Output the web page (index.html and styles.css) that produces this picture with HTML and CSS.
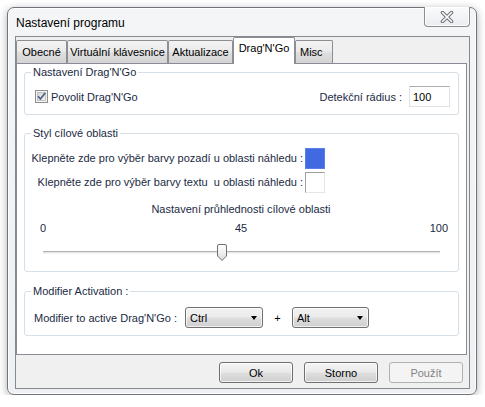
FILE: index.html
```html
<!DOCTYPE html>
<html lang="cs">
<head>
<meta charset="utf-8">
<title>Nastavení programu</title>
<link rel="stylesheet" href="styles.css">
</head>
<body>
<div class="window">
  <div class="titlebar">
    <span class="title">Nastavení programu</span>
    <div class="close">
      <svg width="14" height="12" viewBox="0 0 14 12">
        <path d="M2.5 1.5 L11.5 10.5 M11.5 1.5 L2.5 10.5" stroke="#6d7075" stroke-width="3.6" stroke-linecap="round" fill="none"/>
        <path d="M2.5 1.5 L11.5 10.5 M11.5 1.5 L2.5 10.5" stroke="#ffffff" stroke-width="1.6" stroke-linecap="round" fill="none"/>
      </svg>
    </div>
  </div>
  <div class="client">
    <div class="tabs">
      <div class="tab t1">Obecné</div>
      <div class="tab t2">Virtuální klávesnice</div>
      <div class="tab t3">Aktualizace</div>
      <div class="tab t4 active">Drag'N'Go</div>
      <div class="tab t5">Misc</div>
    </div>
    <div class="panel">
      <fieldset class="group g1">
        <legend>Nastavení Drag'N'Go</legend>
        <div class="row">
          <span class="check">
            <svg width="13" height="13" viewBox="0 0 13 13">
              <defs>
                <linearGradient id="cb" x1="0" y1="0" x2="1" y2="1">
                  <stop offset="0" stop-color="#d3d3d3"/>
                  <stop offset="1" stop-color="#f6f6f6"/>
                </linearGradient>
              </defs>
              <rect x="0.5" y="0.5" width="12" height="12" fill="#f4f4f4" stroke="#8e8f8f"/>
              <rect x="2.5" y="2.5" width="8" height="8" fill="url(#cb)" stroke="#b9b9b9" stroke-width="0.8"/>
              <path d="M3 6.3 L5.4 9 L10.2 3" stroke="#4a5f8c" stroke-width="1.7" fill="none"/>
            </svg>
          </span>
          <span class="checklabel">Povolit Drag'N'Go</span>
          <span class="spacer"></span>
          <span class="lbl">Detekční rádius :</span>
          <span class="textbox">100</span>
        </div>
      </fieldset>

      <fieldset class="group g2">
        <legend>Styl cílové oblasti</legend>
        <div class="colorrows">
          <span class="clabel">Klepněte zde pro výběr barvy pozadí u oblasti náhledu :</span>
          <span class="swatch blue"></span>
          <span class="clabel">Klepněte zde pro výběr barvy textu &nbsp;u oblasti náhledu :</span>
          <span class="swatch white"></span>
        </div>
        <div class="slidertitle">Nastavení průhlednosti cílové oblasti</div>
        <div class="ticks">
          <span class="tl">0</span>
          <span class="tc">45</span>
          <span class="tr">100</span>
        </div>
        <div class="slider">
          <div class="track"></div>
          <svg class="thumb" style="left: calc(45% - 5px)" width="10" height="17" viewBox="0 0 10 17">
            <defs>
              <linearGradient id="th" x1="0" y1="0" x2="0" y2="1">
                <stop offset="0" stop-color="#ffffff"/>
                <stop offset="0.5" stop-color="#f0f0f0"/>
                <stop offset="1" stop-color="#d9d9d9"/>
              </linearGradient>
            </defs>
            <path d="M2 0.5 H8 Q9.5 0.5 9.5 2 V12 L5 16.5 L0.5 12 V2 Q0.5 0.5 2 0.5 Z" fill="url(#th)" stroke="#707070"/>
          </svg>
        </div>
      </fieldset>

      <fieldset class="group g3">
        <legend>Modifier Activation :</legend>
        <div class="row">
          <span class="modlabel">Modifier to active Drag'N'Go :</span>
          <span class="combo c1">Ctrl<span class="arrow"></span></span>
          <span class="plus">+</span>
          <span class="combo c2">Alt<span class="arrow"></span></span>
        </div>
      </fieldset>
    </div>
    <div class="buttons">
      <span class="btn">Ok</span>
      <span class="btn">Storno</span>
      <span class="btn disabled">Použít</span>
    </div>
  </div>
</div>
</body>
</html>
```
FILE: styles.css
```css
* { box-sizing: border-box; }
html, body { margin: 0; padding: 0; background: #ffffff; }
body {
  font-family: "Liberation Sans", Arial, sans-serif;
  font-size: 11px;
  line-height: 16px;
  color: #000;
}

.window {
  margin: 7px 0 0 7px;
  width: 470px;
  height: 388px;
  border: 1px solid #6f747a;
  border-radius: 7px;
  background: linear-gradient(#f3f5f7, #eef0f3);
  box-shadow: 0 2px 8px rgba(0,0,0,0.32), inset 0 0 0 1px rgba(255,255,255,0.9);
  padding: 0 6px 5px 7px;
  display: flex;
  flex-direction: column;
}

.titlebar {
  height: 28px;
  display: flex;
  justify-content: space-between;
  align-items: flex-start;
  padding-left: 1px;
}
.title {
  padding-top: 8px;
  line-height: 15px;
  font-size: 12px;
  color: #000;
}
.close {
  margin-top: -1px;
  width: 46px;
  height: 20px;
  border: 1px solid #8a8e95;
  border-top: none;
  border-radius: 0 0 4px 4px;
  background: linear-gradient(#fbfbfc, #e9ecf0);
  box-shadow: inset 0 0 0 1px rgba(255,255,255,0.8);
  display: flex;
  align-items: center;
  justify-content: center;
  padding-top: 1px;
}

.client {
  height: 353px;
  border: 1px solid #858a90;
  background: #f0f0f0;
  display: flex;
  flex-direction: column;
}

.tabs {
  height: 26px;
  display: flex;
  align-items: flex-end;
}
.tab {
  height: 23px;
  border: 1px solid #8c8e94;
  border-bottom: none;
  border-radius: 2px 2px 0 0;
  background: linear-gradient(#f3f3f3 0%, #ebebeb 45%, #dedede 55%, #d3d3d3 100%);
  text-align: center;
  padding-top: 3px;
  color: #000;
  white-space: nowrap;
}
.t1 { width: 51px; }
.t2 { width: 101px; }
.t3 { width: 65px; }
.t4 { width: 62px; }
.t5 { width: 38px; text-align: left; padding-left: 4px; }
.tab.active {
  height: 27px;
  margin-bottom: -1px;
  background: #ffffff;
  position: relative;
  z-index: 1;
  padding-top: 2px;
}

.panel {
  width: 451px;
  height: 292px;
  border: 1px solid #898c95;
  background: #ffffff;
  padding: 0 7px;
  color: #1b2a44;
}

.group {
  margin: 0;
  min-width: 0;
  border: 1px solid #d5dfe5;
  border-radius: 3px;
  padding: 6px 8px 7px 9px;
}
.group legend {
  padding: 0 2px;
  margin-left: -3px;
  line-height: 16px;
}
.g2 { margin-top: 10px; padding-top: 7px; padding-bottom: 10px; }
.g3 { margin-top: 11px; padding-top: 8px; }

.row {
  display: flex;
  align-items: center;
  height: 21px;
}
.check { width: 13px; height: 13px; margin-left: 1px; display: flex; }
.checklabel { margin-left: 3px; }
.spacer { flex: 1; }
.lbl { margin-right: 7px; }
.textbox {
  width: 41px;
  height: 21px;
  border: 1px solid #dfe3e8;
  border-top-color: #abadb3;
  background: #fff;
  padding: 2px 0 0 3px;
  color: #000;
}

.colorrows {
  display: grid;
  grid-template-columns: 269px 20px;
  column-gap: 2px;
  row-gap: 3px;
}
.clabel {
  justify-self: end;
  white-space: nowrap;
  line-height: 21px;
  height: 21px;
}
.swatch { width: 20px; height: 21px; }
.swatch.blue { background: #4169e1; border: 1px solid #5a7fe8; }
.swatch.white {
  background: #fff;
  border: 1px solid #e6e6e6;
  border-left-color: #a0a0a0;
  border-top-color: #a0a0a0;
}

.slidertitle {
  margin-top: 8px;
  text-align: center;
  padding-right: 2px;
}
.ticks {
  margin: 3px 0 0 6px;
  width: 408px;
  display: grid;
  grid-template-columns: 195px auto 1fr;
}
.tl { text-align: left; }
.tc { text-align: center; }
.tr { text-align: right; }

.slider {
  position: relative;
  margin: 7px 0 0 9px;
  width: 397px;
  height: 18px;
  display: flex;
  align-items: center;
}
.track {
  width: 100%;
  height: 3px;
  border-top: 1px solid #b1b1b1;
  background: #e4e6e8;
  border-bottom: 1px solid #f5f5f5;
}
.thumb {
  position: absolute;
  top: 1px;
}

.modlabel { width: 151px; white-space: nowrap; }
.combo {
  position: relative;
  height: 21px;
  border: 1px solid #707070;
  border-radius: 3px;
  background: linear-gradient(#f3f3f3 0%, #ebebeb 45%, #dddddd 55%, #cfcfcf 100%);
  box-shadow: inset 0 0 0 1px rgba(255,255,255,0.7);
  padding: 2px 0 0 4px;
  color: #000;
}
.c1 { width: 78px; }
.c2 { width: 77px; }
.arrow {
  position: absolute;
  right: 5px;
  top: 8px;
  width: 0;
  height: 0;
  border-left: 3.5px solid transparent;
  border-right: 3.5px solid transparent;
  border-top: 4px solid #000;
}
.plus { width: 29px; text-align: center; color: #000; }

.buttons {
  flex: 1;
  display: flex;
  justify-content: flex-end;
  align-items: flex-start;
  padding: 7px 6px 0 0;
  gap: 11px;
}
.btn {
  width: 74px;
  height: 21px;
  border: 1px solid #707070;
  border-radius: 3px;
  background: linear-gradient(#f3f3f3 0%, #ebebeb 45%, #dddddd 55%, #cfcfcf 100%);
  box-shadow: inset 0 0 0 1px rgba(255,255,255,0.7);
  text-align: center;
  padding-top: 2px;
  color: #000;
}
.btn.disabled {
  border-color: #adb2b5;
  background: #f4f4f4;
  box-shadow: none;
  color: #838383;
}
```
